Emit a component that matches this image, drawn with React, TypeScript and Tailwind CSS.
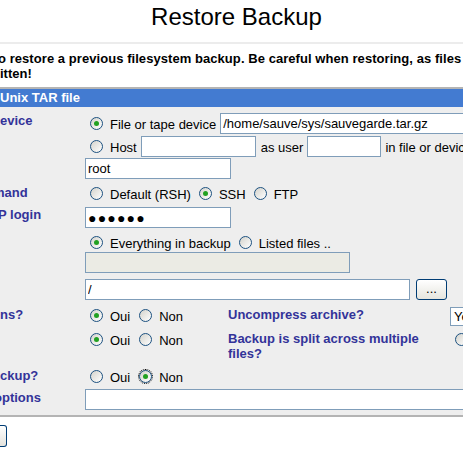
import React from "react";

function Radio({ checked = false, focus = false }: { checked?: boolean; focus?: boolean }) {
  return (
    <span
      className={
        "flex h-[13px] w-[13px] shrink-0 items-center justify-center rounded-full border border-[#1c5180] bg-linear-to-br from-[#d4d3cc] to-white " +
        (focus ? "outline-1 outline-dotted outline-black" : "")
      }
    >
      {checked && <span className="h-[5px] w-[5px] rounded-full bg-[#21a121]" />}
    </span>
  );
}

function Option({ label, checked, focus, className = "" }: { label: string; checked?: boolean; focus?: boolean; className?: string }) {
  return (
    <span className={"flex items-start " + className}>
      <Radio checked={checked} focus={focus} />
      <span className="ml-[7px] whitespace-nowrap">{label}</span>
    </span>
  );
}

function Field({ value = "", className = "" }: { value?: string; className?: string }) {
  return (
    <input
      readOnly
      value={value}
      className={"h-[21px] shrink-0 border border-[#7f9db9] bg-white px-[2px] leading-[15px] text-black outline-none " + className}
    />
  );
}

const label = "w-[85px] shrink-0 whitespace-nowrap font-bold text-[#333399]";

export default function App() {
  return (
    <div className="h-[463px] w-[463px] overflow-hidden bg-white font-['Liberation_Sans',Arial,sans-serif] text-[13px] leading-[15px] text-black">
      {/* Title */}
      <div className="h-[42px] pl-[10px] pt-[3px] text-center text-[24px] leading-[28px]">Restore Backup</div>
      <div className="h-[2px] bg-[#ececec]" />

      {/* Intro */}
      <div className="-ml-[2px] pt-[7px] font-bold whitespace-nowrap">
        <div className="tracking-[0.06px]">o restore a previous filesystem backup. Be careful when restoring, as files</div>
        <div className="ml-[2px]">itten!</div>
      </div>

      {/* Section header */}
      <div className="mt-[6px] border-t-2 border-[#b4b4b4]">
        <div className="h-[18px] bg-[#437bd1] pt-[1px] font-bold text-white">Unix TAR file</div>
      </div>

      {/* Form */}
      <div className="border-b-2 border-[#b4b4b4] bg-[#eeeeee]">
        {/* Device */}
        <div className="flex h-[73px]">
          <div className={label + " pt-[6px]"}>evice</div>
          <div className="pt-[6px]">
            <div className="flex h-[21px] items-start">
              <Option checked label="File or tape device" className="ml-[5px] mt-[4px]" />
              <Field value="/home/sauve/sys/sauvegarde.tar.gz" className="ml-[4px] w-[260px] text-[13px]" />
            </div>
            <div className="mt-[2px] flex h-[21px] items-start whitespace-nowrap">
              <Option label="Host" className="ml-[5px] mt-[4px]" />
              <Field className="ml-[4px] w-[115px]" />
              <span className="ml-[5px] mt-[4px]">as user</span>
              <Field className="ml-[4px] w-[74px]" />
              <span className="ml-[4px] mt-[4px]">in file or device</span>
            </div>
            <div className="mt-[1px] flex">
              <Field value="root" className="w-[146px] text-[13px]" />
            </div>
          </div>
        </div>

        {/* Command */}
        <div className="flex h-[24px]">
          <div className={label + " -ml-[7px] w-[92px] pt-[5px]"}>mand</div>
          <div className="flex items-start pt-[7px]">
            <Option label="Default (RSH)" className="ml-[5px]" />
            <Option checked label="SSH" className="ml-[8px]" />
            <Option label="FTP" className="ml-[8px]" />
          </div>
        </div>

        {/* Login */}
        <div className="flex h-[24px]">
          <div className={label + " -ml-[2px] w-[87px] pt-[3px]"}>P login</div>
          <div className="flex pt-[3px]">
            <Field value="●●●●●●" className="w-[146px] text-[14px] tracking-[1.2px]" />
          </div>
        </div>

        {/* Files */}
        <div className="flex h-[72px]">
          <div className={label} />
          <div className="pt-[8px]">
            <div className="flex items-start">
              <Option checked label="Everything in backup" className="ml-[5px]" />
              <Option label="Listed files .." className="ml-[8px]" />
            </div>
            <div className="mt-[1px] h-[21px] w-[265px] border border-[#7f9db9] bg-[#ebebe4]" />
            <div className="mt-[6px] flex">
              <Field value="/" className="w-[325px] text-[13px]" />
              <button className="ml-[6px] h-[21px] w-[31px] rounded-[3px] border border-[#003c74] bg-linear-to-b from-white to-[#e6e5de] pb-[3px] text-[13px] leading-[13px]">
                ...
              </button>
            </div>
          </div>
        </div>

        {/* Permissions / uncompress */}
        <div className="flex h-[27px]">
          <div className={label + " pt-[7px]"}>ns?</div>
          <div className="flex w-[143px] shrink-0 items-start pt-[9px]">
            <Option checked label="Oui" className="ml-[5px]" />
            <Option label="Non" className="ml-[9px]" />
          </div>
          <div className="w-[222px] shrink-0 pt-[7px] font-bold text-[#333399]">Uncompress archive?</div>
          <div className="pt-[7px]">
            <div className="h-[19px] w-[60px] border border-[#7f9db9] bg-white pl-[3px] pt-[1px]">Yes</div>
          </div>
        </div>

        {/* Split */}
        <div className="flex h-[36px]">
          <div className={label} />
          <div className="flex w-[143px] shrink-0 items-start pt-[6px]">
            <Option checked label="Oui" className="ml-[5px]" />
            <Option label="Non" className="ml-[9px]" />
          </div>
          <div className="w-[222px] shrink-0 pt-[4px] font-bold text-[#333399]">Backup is split across multiple files?</div>
          <div className="flex pt-[6px]">
            <Option label="Oui" className="ml-[5px]" />
          </div>
        </div>

        {/* Only show */}
        <div className="flex h-[23px]">
          <div className={label + " pt-[5px]"}>ckup?</div>
          <div className="flex items-start pt-[7px]">
            <Option label="Oui" className="ml-[5px]" />
            <Option checked focus label="Non" className="ml-[9px]" />
          </div>
        </div>

        {/* Extra options */}
        <div className="flex h-[29px]">
          <div className={label + " -ml-[6px] w-[91px] pt-[4px]"}>options</div>
          <div className="flex pt-[3px]">
            <Field className="w-[400px]" />
          </div>
        </div>
      </div>

      {/* Submit */}
      <div className="mt-[8px] h-[22px] w-[7px] rounded-r-[3px] border border-l-0 border-[#003c74] bg-linear-to-b from-white to-[#e3e2dc]" />
    </div>
  );
}
